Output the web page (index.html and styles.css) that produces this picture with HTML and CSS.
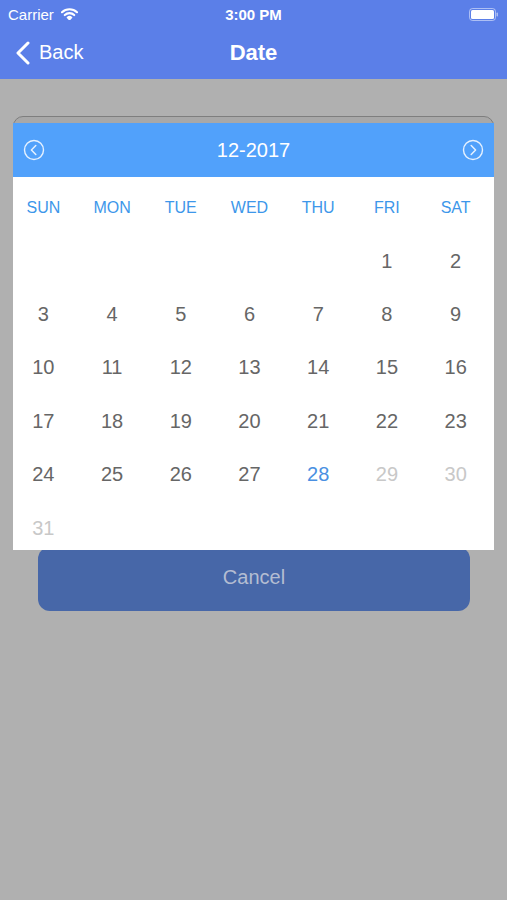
FILE: index.html
```html
<!DOCTYPE html>
<html lang="en">
	<head>
		<meta charset="utf-8">
		<title>Date</title>
		<link rel="stylesheet" href="styles.css">
	</head>
	<body>
		<div class="top">
			<div class="status">
				<div class="carrier">Carrier
					<svg class="wifi" width="17" height="12" viewBox="0 0 17 12">
						<path d="M1 4.2a11 11 0 0 1 15 0" stroke="#fff" stroke-width="2.2" fill="none" stroke-linecap="round"/>
						<path d="M3.8 7a7 7 0 0 1 9.4 0" stroke="#fff" stroke-width="2.2" fill="none" stroke-linecap="round"/>
						<path d="M6.4 9.6a3 3 0 0 1 4.2 0L8.5 11.8z" fill="#fff" stroke="#fff" stroke-width="1.4" stroke-linejoin="round"/>
					</svg>
				</div>
				<div class="time">3:00 PM</div>
				<div class="battery">
					<svg width="30" height="13" viewBox="0 0 30 13">
						<rect x="0.5" y="0.5" width="26" height="12" rx="3" fill="none" stroke="rgba(255,255,255,0.5)"/>
						<rect x="2" y="2" width="23" height="9" rx="1.5" fill="#fff"/>
						<rect x="27.5" y="4.5" width="1.5" height="4" rx="0.7" fill="rgba(255,255,255,0.5)"/>
					</svg>
				</div>
			</div>
			<div class="navbar">
				<div class="back">
					<svg width="14" height="24" viewBox="0 0 14 24">
						<path d="M12 2L2 12l10 10" stroke="#fff" stroke-width="3" fill="none" stroke-linecap="round" stroke-linejoin="round"/>
					</svg>
					<span>Back</span>
				</div>
				<div class="title">Date</div>
			</div>
		</div>

		<div class="main">
			<div class="panel"></div>
			<div class="cancel">Cancel</div>
		</div>

		<!-- calendar popup over the page -->
		<div class="picker">
			<div class="picker-head">
				<svg class="arrow" width="22" height="22" viewBox="0 0 22 22">
					<circle cx="11" cy="11" r="9.5" stroke="rgba(255,255,255,0.85)" stroke-width="1.4" fill="none"/>
					<path d="M12.8 6.5L8.4 11l4.4 4.5" stroke="rgba(255,255,255,0.85)" stroke-width="1.5" fill="none" stroke-linecap="round" stroke-linejoin="round"/>
				</svg>
				<div class="month">12-2017</div>
				<svg class="arrow" width="22" height="22" viewBox="0 0 22 22">
					<circle cx="11" cy="11" r="9.5" stroke="rgba(255,255,255,0.85)" stroke-width="1.4" fill="none"/>
					<path d="M9.2 6.5l4.4 4.5-4.4 4.5" stroke="rgba(255,255,255,0.85)" stroke-width="1.5" fill="none" stroke-linecap="round" stroke-linejoin="round"/>
				</svg>
			</div>
			<div class="body">
				<div class="grid">
					<div class="wd">SUN</div><div class="wd">MON</div><div class="wd">TUE</div><div class="wd">WED</div><div class="wd">THU</div><div class="wd">FRI</div><div class="wd">SAT</div>

					<div></div><div></div><div></div><div></div><div></div>
					<div class="day">1</div><div class="day">2</div>

					<div class="day">3</div><div class="day">4</div><div class="day">5</div><div class="day">6</div><div class="day">7</div><div class="day">8</div><div class="day">9</div>

					<div class="day">10</div><div class="day">11</div><div class="day">12</div><div class="day">13</div><div class="day">14</div><div class="day">15</div><div class="day">16</div>

					<div class="day">17</div><div class="day">18</div><div class="day">19</div><div class="day">20</div><div class="day">21</div><div class="day">22</div><div class="day">23</div>

					<div class="day">24</div><div class="day">25</div><div class="day">26</div><div class="day">27</div>
					<div class="day today">28</div><div class="day off">29</div><div class="day off">30</div>

					<div class="day off">31</div>
				</div>
			</div>
		</div>
	</body>
</html>
```

FILE: styles.css
```css
body {
	margin: 0;
	height: 900px;
	background: #b0b0b0;
	font-family: "Liberation Sans", Arial, sans-serif;
	position: relative;
}

.top {
	background: #5b7fe8;
	color: #fff;
}

.status {
	height: 28px;
	display: flex;
	align-items: center;
	justify-content: space-between;
	padding: 0 8px;
	font-size: 15px;
	position: relative;
}

.carrier {
	display: flex;
	align-items: center;
	gap: 7px;
}

.time {
	position: absolute;
	left: 0;
	right: 0;
	text-align: center;
	font-weight: bold;
}

.battery {
	display: flex;
	padding-top: 1px;
}

.navbar {
	height: 51px;
	display: flex;
	align-items: center;
	position: relative;
}

.back {
	display: flex;
	align-items: center;
	gap: 9px;
	padding-left: 16px;
	font-size: 20px;
	padding-bottom: 2px;
}

.title {
	position: absolute;
	left: 0;
	right: 0;
	text-align: center;
	font-size: 22px;
	font-weight: bold;
	padding-bottom: 2px;
}

.main {
	padding: 37px 13px 0;
}

.panel {
	height: 423px;
	border: 1px solid #7e7e7e;
	border-radius: 10px;
	background: #a8a8a8;
}

.cancel {
	margin: 6px 24px 0 25px;
	height: 64px;
	border-radius: 12px;
	background: #4767a8;
	color: #b4bdd2;
	font-size: 20px;
	display: flex;
	align-items: center;
	justify-content: center;
	padding-bottom: 4px;
	box-sizing: border-box;
}

.picker {
	position: absolute;
	top: 123px;
	left: 13px;
	width: 481px;
	background: #fff;
}

.picker-head {
	height: 54px;
	background: #51a1fb;
	display: flex;
	align-items: center;
	justify-content: space-between;
	padding: 0 10px;
}

.month {
	color: #fff;
	font-size: 20px;
}

.body {
	height: 373px;
	overflow: hidden;
}

.grid {
	display: grid;
	grid-template-columns: repeat(7, 1fr);
	grid-auto-rows: 53.4px;
	padding-top: 4px;
	margin: 0 4px 0 -4px;
}

.grid div {
	display: flex;
	align-items: center;
	justify-content: center;
}

.wd {
	color: #3d97ea;
	font-size: 16px;
}

.day {
	color: #666;
	font-size: 20px;
}

.today {
	color: #4a90e2;
}

.off {
	color: #c8c8c8;
}
```
